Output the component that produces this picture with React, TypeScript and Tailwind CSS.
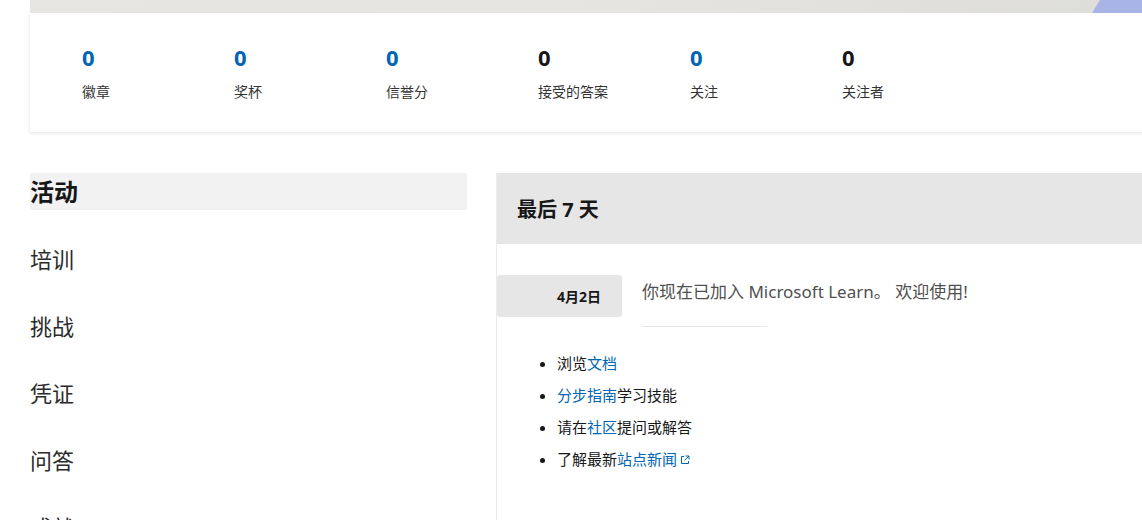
import React from "react";

type Stat = { value: number; label: string; link: boolean };

const stats: Stat[] = [
  { value: 0, label: "徽章", link: true },
  { value: 0, label: "奖杯", link: true },
  { value: 0, label: "信誉分", link: true },
  { value: 0, label: "接受的答案", link: false },
  { value: 0, label: "关注", link: true },
  { value: 0, label: "关注者", link: false },
];

const navItems = ["活动", "培训", "挑战", "凭证", "问答", "成就"];

function ExternalIcon() {
  return (
    <svg width="10" height="10" viewBox="0 0 10 10" className="inline-block ml-[3px] -mt-[2px]" fill="none" stroke="#0065b3" strokeWidth="1">
      <path d="M4 1.5H1.5v7h7V6" />
      <path d="M5.5 1h3.5v3.5M9 1L4.5 5.5" />
    </svg>
  );
}

export default function App() {
  return (
    <div
      className="w-[1142px] h-[520px] overflow-hidden bg-white text-[#171717]"
      style={{ fontFamily: '"Noto Sans", "Noto Sans CJK SC", sans-serif' }}
    >
      <div className="ml-[30px] w-[1160px]">
        {/* banner strip */}
        <div className="relative h-[13px] bg-gradient-to-r from-[#e8e6e0] via-[#e6e4df] to-[#dcdcd8] overflow-hidden">
          <svg className="absolute left-[1060px] top-0" width="100" height="13" viewBox="0 0 100 13">
            <polygon points="10,0 100,0 100,13 2,13" fill="#a8b4e6" />
          </svg>
        </div>

        {/* stats card */}
        <div className="h-[119px] bg-white shadow-[0_1px_4px_rgba(0,0,0,0.12)] flex pl-[52px] pt-[30px]">
          {stats.map((s) => (
            <div key={s.label} className="w-[152px] flex flex-col">
              <span className={`text-[22px] leading-[28px] font-bold ${s.link ? "text-[#0065b3]" : "text-[#171717]"}`}>
                {s.value}
              </span>
              <span className="mt-[11px] text-[14px] leading-[20px] text-[#333]">{s.label}</span>
            </div>
          ))}
        </div>

        <div className="mt-[41px] flex gap-[29px]">
          {/* left nav */}
          <nav className="w-[437px] flex flex-col">
            {navItems.map((it, i) =>
              i === 0 ? (
                <div key={it} className="h-[37px] bg-[#f2f2f2] flex items-center text-[24px] font-bold text-[#171717]">
                  {it}
                </div>
              ) : (
                <div key={it} className="h-[67px] flex items-center text-[22px] text-[#2b2b2b] [&:nth-child(2)]:mt-[16px]">
                  {it}
                </div>
              )
            )}
          </nav>

          {/* right panel */}
          <section className="flex-1 min-h-[400px] bg-white border-l border-[#ebebeb]">
            <div className="h-[71px] bg-[#e6e6e6] flex items-center pl-[20px] pt-[3px] text-[20px] font-bold text-[#171717]">
              最后 7 天
            </div>

            <div className="mt-[31px] flex items-start">
              <div className="w-[125px] h-[42px] bg-[#e6e6e6] rounded-[3px] flex items-center justify-end pr-[21px] text-[14px] font-bold text-[#171717]">
                4月2日
              </div>
              <div className="ml-[20px] flex flex-col">
                <p className="text-[17px] leading-[34px] text-[#505050]">你现在已加入 Microsoft Learn。 欢迎使用!</p>
                <div className="mt-[17px] w-[125px] h-px bg-[#e6e6e6]" />
              </div>
            </div>

            <ul className="mt-[20px] pl-[60px] list-disc text-[15px] leading-[32px] text-[#171717]">
              <li>
                浏览<a className="text-[#0065b3]">文档</a>
              </li>
              <li>
                <a className="text-[#0065b3]">分步指南</a>学习技能
              </li>
              <li>
                请在<a className="text-[#0065b3]">社区</a>提问或解答
              </li>
              <li>
                了解最新<a className="text-[#0065b3]">站点新闻</a>
                <ExternalIcon />
              </li>
            </ul>
          </section>
        </div>
      </div>
    </div>
  );
}
